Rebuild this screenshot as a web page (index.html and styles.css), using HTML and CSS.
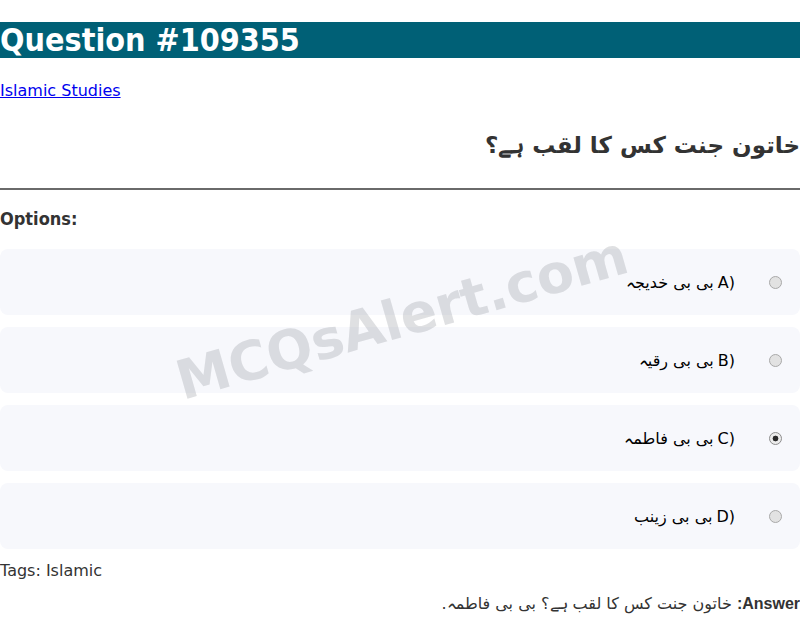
FILE: index.html
```html
<!DOCTYPE html>
<html lang="ur">
<head>
<meta charset="utf-8">
<title>Question #109355</title>
<link rel="stylesheet" href="styles.css">
</head>
<body>
<h1 class="title">Question #109355</h1>
<p class="cat"><a href="#">Islamic Studies</a></p>
<h2 class="question" dir="rtl">خاتون جنت کس کا لقب ہے؟</h2>
<hr class="rule">
<h3 class="opts-head">Options:</h3>
<div class="options">
  <label class="option"><input type="radio" name="q" class="radio"><span class="letter">A)</span><span class="otext" dir="rtl">بی بی خدیجہ</span></label>
  <label class="option"><input type="radio" name="q" class="radio"><span class="letter">B)</span><span class="otext" dir="rtl">بی بی رقیہ</span></label>
  <label class="option"><input type="radio" name="q" class="radio" checked><span class="letter">C)</span><span class="otext" dir="rtl">بی بی فاطمہ</span></label>
  <label class="option"><input type="radio" name="q" class="radio"><span class="letter">D)</span><span class="otext" dir="rtl">بی بی زینب</span></label>
</div>
<p class="tags">Tags: Islamic</p>
<p class="answer" dir="rtl"><strong class="ans-label">Answer:</strong> خاتون جنت کس کا لقب ہے؟ بی بی فاطمہ.</p>
<div class="watermark">MCQsAlert.com</div>
</body>
</html>
```
FILE: styles.css
```css
html, body {
  margin: 0;
  padding: 0;
  background: #fff;
}
body {
  font-family: "DejaVu Sans", sans-serif;
  font-size: 16px;
  color: #000;
  position: relative;
  overflow: hidden;
  height: 628px;
}
.title {
  margin: 22px 0 0;
  background: #006076;
  color: #fff;
  font-family: "DejaVu Sans Condensed", "DejaVu Sans", sans-serif;
  font-stretch: condensed;
  font-size: 32px;
  font-weight: bold;
  line-height: 36px;
  height: 36px;
}
.cat {
  margin: 23px 0 0;
  line-height: 19px;
}
.cat a {
  color: #0000ee;
}
.question {
  margin: 31px 0 0;
  font-size: 23px;
  font-weight: bold;
  color: #333;
  line-height: 28px;
  text-align: right;
}
.rule {
  margin: 29px 0 0;
  border: 0;
  border-top: 2px solid #6a6a6a;
  height: 0;
}
.opts-head {
  margin: 18px 0 0;
  font-family: "DejaVu Sans Condensed", "DejaVu Sans", sans-serif;
  font-stretch: condensed;
  font-size: 18px;
  font-weight: bold;
  color: #333;
  line-height: 22px;
}
.options {
  margin-top: 19px;
  display: flex;
  flex-direction: column;
  gap: 12px;
}
.option {
  display: flex;
  flex-direction: row-reverse;
  align-items: center;
  gap: 4px;
  background: #f7f8fc;
  border-radius: 8px;
  padding: 0 18px;
  height: 66px;
  box-sizing: border-box;
  line-height: 19px;
}
.radio {
  appearance: none;
  -webkit-appearance: none;
  margin: 0 0 0 30px;
  width: 13px;
  height: 13px;
  box-sizing: border-box;
  border: 1px solid #a9a9a9;
  border-radius: 50%;
  background: #e2e2e2;
}
.radio:checked {
  background: radial-gradient(circle, #2a2a2a 0 2.6px, #ececec 3.2px);
  border-color: #8d8d8d;
}
.letter, .otext {
  color: #000;
}
.tags {
  margin: 12px 0 0;
  color: #333;
  line-height: 19px;
}
.answer {
  margin: 14px 0 0;
  color: #333;
  line-height: 19px;
}
.ans-label {
  font-family: "Liberation Sans", sans-serif;
  font-weight: bold;
}
.watermark {
  position: absolute;
  left: 402px;
  top: 318px;
  transform: translate(-50%, -50%) rotate(-16deg);
  font-family: "DejaVu Sans", sans-serif;
  font-weight: bold;
  font-size: 54px;
  color: rgba(150, 152, 160, 0.3);
  white-space: nowrap;
  pointer-events: none;
}
```
